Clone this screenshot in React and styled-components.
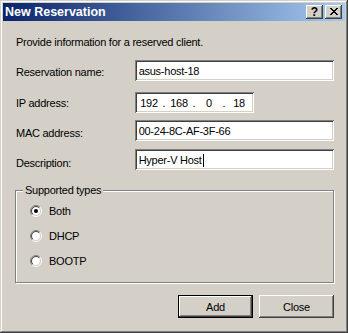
import React from "react";
import styled, { createGlobalStyle } from "styled-components";

const GlobalStyle = createGlobalStyle`
  body {
    margin: 0;
    background: #d4d0c8;
    font-family: "Liberation Sans", Arial, sans-serif;
    font-size: 11px;
    letter-spacing: -0.25px;
    color: #000;
  }
`;

const raised = `
  box-shadow: inset -1px -1px 0 #404040, inset 1px 1px 0 #ffffff,
    inset -2px -2px 0 #808080, inset 2px 2px 0 #d4d0c8;
`;

const Window = styled.div`
  box-sizing: border-box;
  width: 348px;
  height: 333px;
  padding: 3px;
  background: #d4d0c8;
  box-shadow: inset -1px -1px 0 #404040, inset 1px 1px 0 #d4d0c8,
    inset -2px -2px 0 #808080, inset 2px 2px 0 #ffffff;
  display: flex;
  flex-direction: column;
`;

const TitleBar = styled.div`
  height: 18px;
  display: flex;
  align-items: center;
  padding: 0 3px 0 2px;
  background: linear-gradient(to right, #0a246a, #a6caf0);
  color: #fff;
`;

const Title = styled.span`
  font-weight: bold;
  font-size: 12.5px;
  letter-spacing: 0;
  line-height: 16px;
  flex: 1;
`;

const CaptionButton = styled.div`
  box-sizing: border-box;
  width: 17px;
  height: 14px;
  margin-left: ${(p) => p.$gap || 0}px;
  background: #d4d0c8;
  ${raised}
  display: flex;
  align-items: center;
  justify-content: center;
  color: #000;
  font-weight: bold;
  font-size: 12px;
  letter-spacing: 0;
  line-height: 12px;
  padding-bottom: 1px;
`;

const Client = styled.div`
  flex: 1;
  display: flex;
  flex-direction: column;
  padding: 15px 11px 0 12px;
`;

const Intro = styled.div`
  line-height: 13px;
  padding-left: 1px;
`;

const Row = styled.div`
  display: flex;
  margin-top: ${(p) => p.$gap}px;
  height: 21px;
`;

const Label = styled.div`
  width: 119px;
  line-height: 13px;
  padding-top: ${(p) => p.$offset}px;
  padding-left: 1px;
`;

const Field = styled.div`
  box-sizing: border-box;
  width: 200px;
  height: 21px;
  background: #fff;
  box-shadow: inset 1px 1px 0 #808080, inset -1px -1px 0 #ffffff,
    inset 2px 2px 0 #404040, inset -2px -2px 0 #d4d0c8;
  padding: 2px 3px 0 4px;
  display: flex;
  align-items: center;
  line-height: 13px;
  white-space: nowrap;
`;

const IpField = styled(Field)`
  width: 119px;
  padding: 2px 0 0 2px;
`;

const Caret = styled.span`
  display: inline-block;
  width: 1px;
  height: 13px;
  background: #000;
  margin-left: 1px;
`;

const Octet = styled.span`
  width: 24px;
  text-align: center;
`;

const Dot = styled.span`
  width: 6px;
  text-align: center;
`;

const Group = styled.div`
  position: relative;
  box-sizing: border-box;
  margin-top: 20px;
  width: 319px;
  height: 93px;
  border: 1px solid #808080;
  box-shadow: inset 1px 1px 0 #ffffff, 1px 1px 0 #ffffff;
  padding: 13px 0 0 14px;
  display: flex;
  flex-direction: column;
  gap: 12px;
`;

const Legend = styled.span`
  position: absolute;
  top: -7px;
  left: 7px;
  padding: 0 2px;
  background: #d4d0c8;
  line-height: 13px;
`;

const RadioRow = styled.div`
  display: flex;
  align-items: center;
  height: 13px;
  gap: 7px;
`;

const ButtonBar = styled.div`
  display: flex;
  justify-content: flex-end;
  gap: 6px;
  margin-top: 12px;
`;

const Button = styled.div`
  box-sizing: border-box;
  width: 75px;
  height: 23px;
  display: flex;
  align-items: center;
  justify-content: center;
  background: #d4d0c8;
  ${(p) =>
    p.$default
      ? `box-shadow: inset 0 0 0 1px #000000, inset -2px -2px 0 #404040,
          inset 2px 2px 0 #ffffff, inset -3px -3px 0 #808080;`
      : raised}
`;

const CLOSE_GLYPH = [
  "XX....XX",
  ".XX..XX.",
  "..XXXX..",
  "...XX...",
  "..XXXX..",
  ".XX..XX.",
  "XX....XX",
];

const CloseIcon = () => (
  <svg width="8" height="7" viewBox="0 0 8 7" shapeRendering="crispEdges">
    {CLOSE_GLYPH.flatMap((line, y) =>
      line.split("").map((c, x) =>
        c === "X" ? <rect key={`${x}-${y}`} x={x} y={y} width="1" height="1" fill="#000" /> : null
      )
    )}
  </svg>
);

// half arc of a circle centred at 6,6: top-left half or bottom-right half
const arc = (r, topLeft) => {
  const d = r * Math.SQRT1_2;
  return topLeft
    ? `M ${6 - d} ${6 + d} A ${r} ${r} 0 0 1 ${6 + d} ${6 - d}`
    : `M ${6 + d} ${6 - d} A ${r} ${r} 0 0 1 ${6 - d} ${6 + d}`;
};

const RadioIcon = ({ checked }) => (
  <svg width="12" height="12" viewBox="0 0 12 12">
    <circle cx="6" cy="6" r="4.5" fill="#fff" />
    <path d={arc(5.5, true)} stroke="#808080" fill="none" />
    <path d={arc(5.5, false)} stroke="#ffffff" fill="none" />
    <path d={arc(4.5, true)} stroke="#404040" fill="none" />
    <path d={arc(4.5, false)} stroke="#d4d0c8" fill="none" />
    {checked && <circle cx="6" cy="6" r="2" fill="#000" />}
  </svg>
);

const Radio = ({ checked, children }) => (
  <RadioRow>
    <RadioIcon checked={checked} />
    <span>{children}</span>
  </RadioRow>
);

const ip = ["192", "168", "0", "18"];

export default function App() {
  return (
    <>
      <GlobalStyle />
      <Window>
        <TitleBar>
          <Title>New Reservation</Title>
          <CaptionButton>?</CaptionButton>
          <CaptionButton $gap={2}>
            <CloseIcon />
          </CaptionButton>
        </TitleBar>
        <Client>
          <Intro>Provide information for a reserved client.</Intro>

          <Row $gap={11}>
            <Label $offset={6}>Reservation name:</Label>
            <Field>asus-host-18</Field>
          </Row>
          <Row $gap={11}>
            <Label $offset={5}>IP address:</Label>
            <IpField>
              {ip.map((part, i) => (
                <React.Fragment key={i}>
                  {i > 0 && <Dot>.</Dot>}
                  <Octet>{part}</Octet>
                </React.Fragment>
              ))}
            </IpField>
          </Row>
          <Row $gap={7}>
            <Label $offset={7}>MAC address:</Label>
            <Field>00-24-8C-AF-3F-66</Field>
          </Row>
          <Row $gap={8}>
            <Label $offset={8}>Description:</Label>
            <Field>
              Hyper-V Host
              <Caret />
            </Field>
          </Row>

          <Group>
            <Legend>Supported types</Legend>
            <Radio checked>Both</Radio>
            <Radio>DHCP</Radio>
            <Radio>BOOTP</Radio>
          </Group>

          <ButtonBar>
            <Button $default>Add</Button>
            <Button>Close</Button>
          </ButtonBar>
        </Client>
      </Window>
    </>
  );
}
